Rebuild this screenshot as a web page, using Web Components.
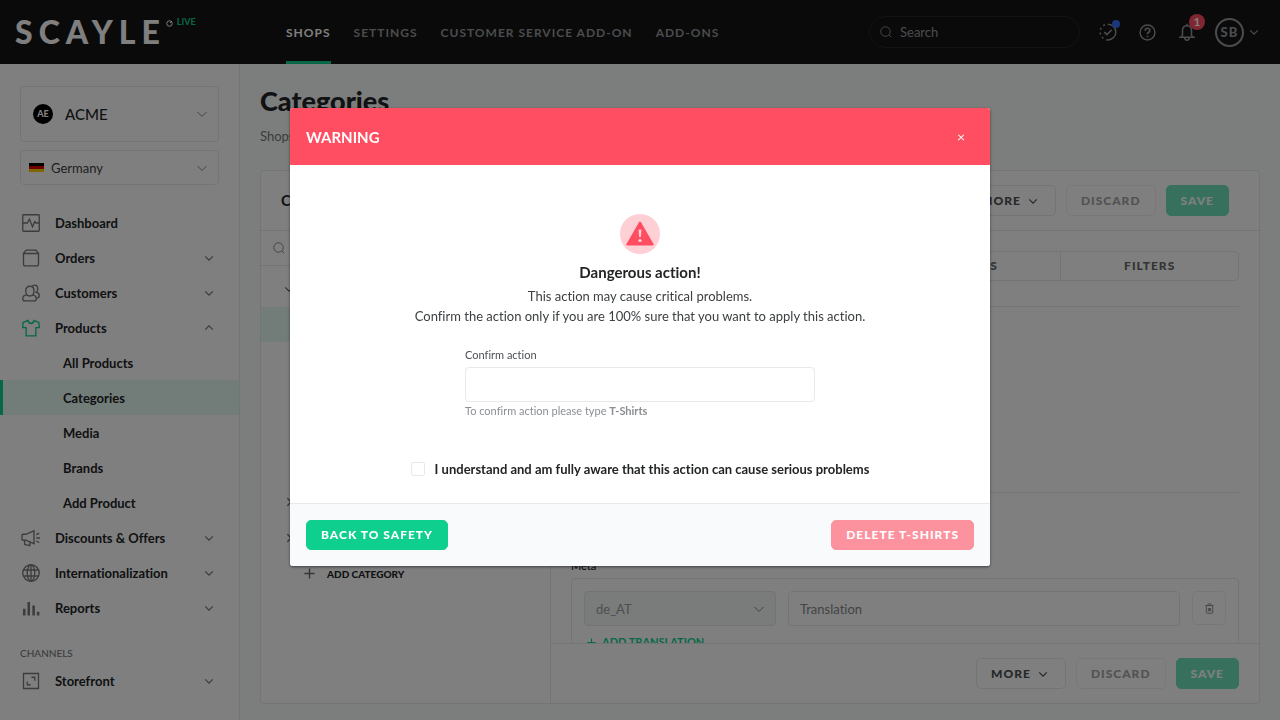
<!DOCTYPE html>
<html lang="en">
<head>
<meta charset="utf-8">
<meta name="viewport" content="width=device-width, initial-scale=1">
<title>Categories</title>
<style>
    :root {
        --green: #0fcf8f;
        --red: #ff4d61;
        --line: #e6eaea;
        --text: #222426;
        --muted: #8b8e92;
        --tint: #e5f9f2;
    }
    body {
        margin: 0;
        font: 13px/20px Lato, "Liberation Sans", sans-serif;
        font-variant-ligatures: no-common-ligatures;
        color: var(--text);
        background: #f9fafa;
    }
</style>
</head>
<body>
<shop-app></shop-app>

<script>
const ICONS = {
    search: '<circle cx="11" cy="11" r="9.5"/><path d="m18 18 4.5 4.5"/>',
    down: '<path d="m3 8 9 9 9-9"/>',
    up: '<path d="m3 16 9-9 9 9"/>',
    right: '<path d="m8 3 9 9-9 9"/>',
    plus: '<path d="M12 1v22M1 12h22"/>',
    dashboard: '<rect x="1" y="1" width="22" height="22" rx="1"/><path d="M1 12h6l3-5 4 10 3-7 1.500 2H23"/>',
    orders: '<path d="M2 6v14q0 2.500 2.500 2.500h15Q22 22.500 22 20V6zM2 6l2.500-3.500Q5 1.500 6.500 1.500h11q1.500 0 2 1L22 6"/>',
    customers: '<path d="M5 9q0-6 5.500-6T16 9q0 7-5.500 7T5 9zM6.500 14.500Q1 15 1 19.500 1 22.500 4 22.500h12q3 0 3-3 0-4.500-5.500-5M13.500 3.500q1-2 3.500-2 4 0 4 5 0 3-2 4.500 4 .500 4 4.500 0 3-4 3"/>',
    products: '<path d="M8 2 1.500 4.500 1 11.500h4.500V22.500h13V11.500H23L22.500 4.500 16 2q-1 4-4 4T8 2z"/>',
    discounts: '<path d="m16 2.500-11 4.500H1.500Q0 7 0 8.500v5Q0 15 1.500 15H5l11 4.500zM3.500 15v5.500q3.500 1 7 1.500V17.500M19 7.500l4-2M19 12h5M19 16l4 2"/>',
    globe: '<circle cx="12" cy="12" r="11"/><ellipse cx="12" cy="12" rx="5" ry="11"/><path d="M12 1v22M2 8h20M2 16h20"/>',
    reports: '<path d="M3 13v9M9 4v18M15.500 8.500V22M21.500 17v5" stroke-width="3.400"/>',
    storefront: '<path d="M2 2h20v20H2zM12.500 7H17v4.500M7 12.500V17h4.500"/>',
    trash: '<path d="M3 5.500h18M5 5.500V20q0 2.500 2 2.500h10q2 0 2-2.500V5.500M8 5.500q0-4 4-4t4 4M9.500 11v7M12 11v7M14.500 11v7"/>',
    task: '<path d="M12 1.500a10.500 10.500 0 0 1 0 21"/><path d="M12 22.500a10.500 10.500 0 0 1 0-21" stroke-dasharray="2.500 4"/><path d="m7 12 3.500 3.500 6.500-6.500"/>',
    help: '<circle cx="12" cy="12" r="10.500"/><path d="M8.800 9.500q0-3.500 3.200-3.500t3.200 3q0 2-2 3-1.200.800-1.200 2.500M12 16.500v2.200" stroke-width="2.400"/>',
    bell: '<path d="M1.500 19h21M4.500 19l1.500-3V10q0-6.500 6-6.500T18 10v6l1.500 3M9 19q0 4 3 4t3-4M12 1v2.500"/>'
};

class UiIcon extends HTMLElement {
    connectedCallback() {
        const size = this.getAttribute('size') || '18';
        const weight = this.getAttribute('weight') || '1.8';
        this.attachShadow({ mode: 'open' }).innerHTML = `
            <style>
                :host { display: inline-flex; flex: none; }
                svg { display: block; fill: none; stroke: currentColor; overflow: visible; }
            </style>
            <svg width="${size}" height="${size}" viewBox="0 0 24 24" stroke-width="${weight}" aria-hidden="true">${ICONS[this.getAttribute('name')]}</svg>
        `;
    }
}
customElements.define('ui-icon', UiIcon);

class UiButton extends HTMLElement {
    connectedCallback() {
        this.attachShadow({ mode: 'open' }).innerHTML = `
            <style>
                :host { display: block; }
                button {
                    display: flex; align-items: center; gap: 7px;
                    box-sizing: border-box; height: var(--button-height, 31px); padding: 0 14px;
                    font: 900 12px/16px Lato, "Liberation Sans", sans-serif;
                    letter-spacing: 1px; text-transform: uppercase; white-space: nowrap;
                    color: #65686b; background: #fff;
                    border: 1px solid var(--line); border-radius: 5px;
                }
                :host([kind="green"]) button { background: var(--green); border-color: var(--green); color: #fff; }
                :host([kind="red"]) button { background: var(--red); border-color: var(--red); color: #fff; }
                :host([menu]) button { padding-right: 17px; color: #4d5053; }
                button:disabled { opacity: .6; }
            </style>
            <button type="button" ${this.hasAttribute('disabled') ? 'disabled' : ''}>
                <slot></slot>${this.hasAttribute('menu') ? '<ui-icon name="down" size="10" weight="3"></ui-icon>' : ''}
            </button>
        `;
    }
}
customElements.define('ui-button', UiButton);

// Drop-down with an optional leading picture in the "lead" slot
class UiSelect extends HTMLElement {
    connectedCallback() {
        this.attachShadow({ mode: 'open' }).innerHTML = `
            <style>
                :host { display: block; --h: 35px; --size: 13px; --lead: 30px; }
                .wrap { display: grid; align-items: center; isolation: isolate; }
                .wrap > * { grid-area: 1 / 1; }
                select {
                    appearance: none; width: 100%; height: var(--h); box-sizing: border-box;
                    padding: 0 32px 0 var(--lead); margin: 0;
                    font: inherit; font-size: var(--size); color: var(--ink, #3d4042);
                    background: var(--fill, #fff); opacity: 1;
                    border: 1px solid var(--line); border-radius: 4px;
                }
                :host([size="large"]) { --h: 56px; --size: 15px; --lead: 44px; --ink: var(--text); }
                :host([size="large"]) select { font-weight: 500; }
                :host([plain]) { --lead: 11px; --fill: #f5f6f6; --ink: #9a9da0; }
                slot { display: block; z-index: 1; pointer-events: none; justify-self: start; padding-left: 9px; }
                :host([size="large"]) slot { padding-left: 13px; }
                ui-icon { justify-self: end; margin-right: 11px; color: #85888b; pointer-events: none; z-index: 1; }
            </style>
            <div class="wrap">
                <select aria-label="${this.getAttribute('label')}" ${this.hasAttribute('disabled') ? 'disabled' : ''}>
                    <option>${this.getAttribute('value')}</option>
                </select>
                <slot name="lead"></slot>
                <ui-icon name="down" size="12" weight="2"></ui-icon>
            </div>
        `;
    }
}
customElements.define('ui-select', UiSelect);

class AppHeader extends HTMLElement {
    connectedCallback() {
        this.attachShadow({ mode: 'open' }).innerHTML = `
            <style>
                :host { display: flex; height: 64px; background: #141414; color: #96999c; }
                .logo { display: flex; width: 270px; padding-left: 15px; box-sizing: border-box; color: #fff; text-decoration: none; }
                .logo b { font-size: 32px; line-height: 64px; font-weight: 900; letter-spacing: 6px; }
                .logo svg { margin-top: 20px; }
                .logo small { margin: 15px 0 0 4px; font-size: 9px; line-height: 14px; font-weight: 700; color: var(--green); }
                nav { display: flex; gap: 23px; flex: 1; padding-left: 16px; }
                nav a {
                    display: flex; align-items: center; box-sizing: border-box;
                    padding-top: 4px; border-bottom: 3px solid transparent;
                    font-size: 12px; line-height: 16px; font-weight: 700; letter-spacing: 1px;
                    color: inherit; text-decoration: none; white-space: nowrap;
                }
                nav a.active { color: #fff; border-bottom-color: var(--green); }
                .search {
                    align-self: center; display: flex; align-items: center; gap: 8px;
                    width: 211px; height: 32px; box-sizing: border-box; padding: 0 10px;
                    border: 1px solid #242627; border-radius: 16px;
                }
                input { flex: 1; min-width: 0; border: 0; background: none; padding: 0; font: inherit; color: #fff; outline: 0; }
                input::placeholder { color: #96999c; opacity: 1; }
                .tools { display: flex; align-items: center; gap: 22px; padding: 0 21px 0 19px; }
                button { position: relative; display: flex; align-items: center; padding: 0; border: 0; background: none; font: inherit; color: inherit; }
                .dot { position: absolute; right: -3px; top: -3px; width: 8px; height: 8px; border-radius: 50%; background: #376ef4; }
                .count {
                    position: absolute; right: -9px; top: -9px; width: 16px; height: 16px; border-radius: 50%;
                    font-size: 12px; line-height: 16px; font-weight: 700; background: var(--red); color: #fff;
                }
                .user { gap: 5px; margin-left: -3px; }
                .avatar {
                    width: 25px; height: 25px; border: 2px solid #96999c; border-radius: 50%;
                    font-size: 13px; line-height: 25px; font-weight: 900; letter-spacing: 1px; text-align: center;
                }
            </style>
            <a class="logo" href="#">
                <b>SCAYLE</b>
                <svg width="7" height="7" viewBox="0 0 14 14" fill="none" stroke="#fff" stroke-width="2"><circle cx="7" cy="7" r="5.500"/><path d="m8 6 4-4"/></svg>
                <small>LIVE</small>
            </a>
            <nav>
                <a class="active" href="#">SHOPS</a>
                <a href="#">SETTINGS</a>
                <a href="#">CUSTOMER SERVICE ADD-ON</a>
                <a href="#">ADD-ONS</a>
            </nav>
            <label class="search">
                <ui-icon name="search" size="12"></ui-icon>
                <input type="search" placeholder="Search" aria-label="Search">
            </label>
            <div class="tools">
                <button aria-label="Tasks"><ui-icon name="task" weight="2"></ui-icon><span class="dot"></span></button>
                <button aria-label="Help"><ui-icon name="help" weight="2" size="17"></ui-icon></button>
                <button aria-label="Notifications"><ui-icon name="bell" weight="2"></ui-icon><span class="count">1</span></button>
                <button class="user" aria-label="Account"><span class="avatar">SB</span><ui-icon name="down" size="10" weight="3"></ui-icon></button>
            </div>
        `;
    }
}
customElements.define('app-header', AppHeader);

class NavItem extends HTMLElement {
    connectedCallback() {
        const icon = this.getAttribute('icon');
        const chevron = this.getAttribute('chevron');
        this.attachShadow({ mode: 'open' }).innerHTML = `
            <style>
                :host { display: block; }
                a {
                    display: flex; align-items: center; height: 35px; box-sizing: border-box;
                    padding: 0 25px 0 22px; font-weight: 700; color: var(--text); text-decoration: none;
                }
                .label { flex: 1; margin-left: 15px; white-space: nowrap; }
                ui-icon { color: #77797c; }
                :host([open]) ui-icon:first-child { color: var(--green); }
                :host([sub]) a { padding-left: 63px; }
                :host([sub]) .label { margin-left: 0; }
                :host([active]) a { padding-left: 60px; border-left: 3px solid var(--green); background: var(--tint); }
            </style>
            <a href="#">
                ${icon ? `<ui-icon name="${icon}"></ui-icon>` : ''}
                <span class="label"><slot></slot></span>
                ${chevron ? `<ui-icon name="${chevron}" size="10" weight="3"></ui-icon>` : ''}
            </a>
        `;
    }
}
customElements.define('nav-item', NavItem);

class SideBar extends HTMLElement {
    connectedCallback() {
        this.attachShadow({ mode: 'open' }).innerHTML = `
            <style>
                :host { display: block; width: 240px; box-sizing: border-box; background: #fff; border-right: 1px solid var(--line); }
                .pickers { display: grid; gap: 8px; padding: 22px 20px 0; }
                .brand {
                    display: block; width: 20px; height: 20px; border-radius: 50%; background: #000; color: #fff;
                    font-size: 9px; line-height: 20px; font-weight: 900; text-align: center;
                }
                .flag { display: block; }
                nav { margin-top: 20px; }
                h2 { margin: 18px 20px 0; font-size: 10px; line-height: 20px; font-weight: 500; color: #77797c; }
                h2 + nav { margin-top: 0; }
            </style>
            <div class="pickers">
                <ui-select size="large" label="Company" value="ACME"><span slot="lead" class="brand">AE</span></ui-select>
                <ui-select label="Country" value="Germany">
                    <svg slot="lead" class="flag" width="15" height="9" viewBox="0 0 15 9"><path fill="#000" d="M0 0h15v3H0z"/><path fill="#d00" d="M0 3h15v3H0z"/><path fill="#ffce00" d="M0 6h15v3H0z"/></svg>
                </ui-select>
            </div>
            <nav>
                <nav-item icon="dashboard">Dashboard</nav-item>
                <nav-item icon="orders" chevron="down">Orders</nav-item>
                <nav-item icon="customers" chevron="down">Customers</nav-item>
                <nav-item icon="products" chevron="up" open>Products</nav-item>
                <nav-item sub>All Products</nav-item>
                <nav-item sub active>Categories</nav-item>
                <nav-item sub>Media</nav-item>
                <nav-item sub>Brands</nav-item>
                <nav-item sub>Add Product</nav-item>
                <nav-item icon="discounts" chevron="down">Discounts &amp; Offers</nav-item>
                <nav-item icon="globe" chevron="down">Internationalization</nav-item>
                <nav-item icon="reports" chevron="down">Reports</nav-item>
            </nav>
            <h2>CHANNELS</h2>
            <nav>
                <nav-item icon="storefront" chevron="down">Storefront</nav-item>
            </nav>
        `;
    }
}
customElements.define('side-bar', SideBar);

class CategoryTree extends HTMLElement {
    connectedCallback() {
        this.attachShadow({ mode: 'open' }).innerHTML = `
            <style>
                :host { display: block; border-right: 1px solid var(--line); }
                h2 { margin: 0; padding: 0 20px; font-size: 15px; line-height: 59px; font-weight: 700; border-bottom: 1px solid var(--line); }
                .search { display: flex; align-items: center; gap: 8px; height: 34px; padding: 0 12px; border-bottom: 1px solid var(--line); color: #85888b; }
                input { flex: 1; min-width: 0; padding: 0; border: 0; font: inherit; outline: 0; }
                ul { margin: 0; padding: 0; list-style: none; }
                .tree { display: grid; gap: 1px; margin: 5px 0 1px; }
                .row { display: flex; align-items: center; height: 35px; padding-left: 23px; color: #65686b; }
                .current { background: var(--tint); }
                button {
                    display: flex; align-items: center; gap: 12px; height: 35px; padding: 0 0 0 43px;
                    border: 0; background: none; color: #65686b;
                    font: 900 10px/16px Lato, "Liberation Sans", sans-serif;
                }
                button span { color: var(--text); }
            </style>
            <h2>Categories</h2>
            <label class="search"><ui-icon name="search" size="12" weight="2"></ui-icon><input type="search" aria-label="Search categories"></label>
            <ul class="tree">
                <li class="row"><ui-icon name="down" size="10" weight="3"></ui-icon></li>
                <li>
                    <ul>
                        <li class="row current"></li>
                        <li class="row"></li>
                        <li class="row"></li>
                        <li class="row"></li>
                    </ul>
                </li>
                <li class="row"></li>
                <li class="row"><ui-icon name="right" size="10" weight="3"></ui-icon></li>
                <li class="row"><ui-icon name="right" size="10" weight="3"></ui-icon></li>
            </ul>
            <button type="button"><ui-icon name="plus" size="11" weight="3"></ui-icon><span>ADD CATEGORY</span></button>
        `;
    }
}
customElements.define('category-tree', CategoryTree);

class CategoryEditor extends HTMLElement {
    connectedCallback() {
        this.attachShadow({ mode: 'open' }).innerHTML = `
            <style>
                :host { display: flex; flex-direction: column; min-width: 0; min-height: 0; }
                .bar { display: flex; justify-content: flex-end; align-items: center; gap: 10px; height: 60px; box-sizing: border-box; flex: none; }
                header { padding: 0 30px; border-bottom: 1px solid var(--line); }
                footer { padding: 0 20px; border-top: 1px solid var(--line); }
                .scroll { flex: 1; min-height: 0; overflow: hidden; padding: 20px 20px 0; }
                .tabs { display: grid; grid-template-columns: 7fr 4fr 4fr; border: 1px solid var(--line); border-radius: 5px; }
                .tabs button {
                    height: 28px; padding: 0; border: 0; border-left: 1px solid var(--line); background: none;
                    font: 900 12px/16px Lato, "Liberation Sans", sans-serif; letter-spacing: 1px; color: #65686b;
                }
                .tabs button:first-child { border-left: 0; }
                section { height: 185px; margin-top: 25px; border: solid var(--line); border-width: 1px 0; }
                h3 { margin: 63px 0 2px; font-size: 11px; line-height: 20px; font-weight: 500; }
                .box { padding: 12px; border: 1px solid var(--line); border-radius: 4px; }
                .row { display: grid; grid-template-columns: 192px 1fr 34px; gap: 12px; align-items: start; }
                input { height: 35px; box-sizing: border-box; padding: 0 11px; border: 1px solid var(--line); border-radius: 4px; font: inherit; min-width: 0; }
                input::placeholder { color: #85888b; opacity: 1; }
                .trash { display: grid; place-items: center; height: 34px; padding: 0; border: 1px solid #efefef; border-radius: 5px; background: none; color: #85888b; }
                .add {
                    display: flex; align-items: center; gap: 6px; margin-top: 8px; padding: 0 0 0 3px;
                    border: 0; background: none; color: var(--green);
                    font: 700 11px/16px Lato, "Liberation Sans", sans-serif;
                }
            </style>
            <header class="bar">
                <ui-button menu>More</ui-button>
                <ui-button disabled>Discard</ui-button>
                <ui-button kind="green" disabled>Save</ui-button>
            </header>
            <div class="scroll">
                <div class="tabs">
                    <button type="button">BASICS</button>
                    <button type="button">IMAGES</button>
                    <button type="button">FILTERS</button>
                </div>
                <section></section>
                <h3>Meta</h3>
                <div class="box">
                    <div class="row">
                        <ui-select plain disabled label="Locale" value="de_AT"></ui-select>
                        <input type="text" placeholder="Translation" aria-label="Translation">
                        <button class="trash" type="button" aria-label="Remove"><ui-icon name="trash" size="11" weight="2"></ui-icon></button>
                    </div>
                    <button class="add" type="button"><ui-icon name="plus" size="9" weight="3"></ui-icon>ADD TRANSLATION</button>
                </div>
            </div>
            <footer class="bar">
                <ui-button menu>More</ui-button>
                <ui-button disabled>Discard</ui-button>
                <ui-button kind="green" disabled>Save</ui-button>
            </footer>
        `;
    }
}
customElements.define('category-editor', CategoryEditor);

class WarningModal extends HTMLElement {
    connectedCallback() {
        this.attachShadow({ mode: 'open' }).innerHTML = `
            <style>
                :host {
                    position: fixed; inset: 0; z-index: 10; box-sizing: border-box; padding: 15vh 16px 0;
                    background: rgb(0 0 0 / 50%);
                }
                .dialog {
                    --button-height: 30px;
                    max-width: 700px; margin: 0 auto; overflow: hidden;
                    background: #fff; border-radius: 3px; box-shadow: 0 1px 3px rgb(0 0 0 / 50%);
                }
                header { display: flex; align-items: center; justify-content: space-between; height: 57px; padding: 0 16px; background: var(--red); color: #fff; }
                h2 { margin: 0; font-size: 15px; line-height: 20px; font-weight: 700; }
                .close { width: 26px; height: 26px; padding: 0; border: 0; background: none; color: #fff; font: 400 14px/20px Lato, "Liberation Sans", sans-serif; }
                .body { display: flex; flex-direction: column; align-items: center; padding: 49px 16px 24px; text-align: center; }
                .body svg { display: block; }
                h3 { margin: 8px 0 4px; font-size: 15px; line-height: 20px; font-weight: 700; }
                p { margin: 0; color: #3d4042; }
                .field { width: 350px; max-width: 100%; margin-top: 19px; text-align: left; font-size: 11px; color: #4d5053; }
                .field label { display: block; margin-bottom: 2px; }
                .field input { display: block; width: 100%; height: 35px; box-sizing: border-box; padding: 0 11px; border: 1px solid var(--line); border-radius: 4px; font: inherit; }
                .hint { line-height: 18px; color: var(--muted); }
                .hint b { font-weight: 700; }
                .agree { display: flex; align-items: center; gap: 10px; margin-top: 39px; font-weight: 700; }
                .agree input { appearance: none; flex: none; width: 14px; height: 14px; margin: 0; border: 1px solid var(--line); border-radius: 2px; background: #fff; }
                footer { display: flex; justify-content: space-between; align-items: center; padding: 16px; background: #f9fafc; border-top: 1px solid var(--line); }
            </style>
            <div class="dialog" role="dialog" aria-modal="true" aria-labelledby="title">
                <header>
                    <h2 id="title">WARNING</h2>
                    <button class="close" type="button" aria-label="Close">×</button>
                </header>
                <div class="body">
                    <svg width="40" height="40" viewBox="0 0 40 40">
                        <circle cx="20" cy="20" r="20" fill="#ffcfd6"/>
                        <path d="M20 8.500 32.700 30.500H7.300z" fill="#ff4d61" stroke="#ff4d61" stroke-width="2" stroke-linejoin="round"/>
                        <path d="m18.600 15.500h2.800l-.500 7.500h-1.800z" fill="#ffcfd6"/>
                        <circle cx="20" cy="26.500" r="1.600" fill="#ffcfd6"/>
                    </svg>
                    <h3>Dangerous action!</h3>
                    <p>This action may cause critical problems.</p>
                    <p>Confirm the action only if you are 100% sure that you want to apply this action.</p>
                    <div class="field">
                        <label for="confirm">Confirm action</label>
                        <input id="confirm" type="text">
                        <div class="hint">To confirm action please type <b>T-Shirts</b></div>
                    </div>
                    <label class="agree"><input type="checkbox">I understand and am fully aware that this action can cause serious problems</label>
                </div>
                <footer>
                    <ui-button kind="green">Back to safety</ui-button>
                    <ui-button kind="red" disabled>Delete T-Shirts</ui-button>
                </footer>
            </div>
        `;
    }
}
customElements.define('warning-modal', WarningModal);

class ShopApp extends HTMLElement {
    connectedCallback() {
        this.attachShadow({ mode: 'open' }).innerHTML = `
            <style>
                :host { display: grid; grid-template: auto minmax(0, 1fr) / auto minmax(0, 1fr); height: 100vh; overflow: hidden; }
                app-header { grid-column: 1 / -1; }
                main { display: flex; flex-direction: column; padding: 21px 20px 16px; min-height: 0; }
                h1 { margin: 0; font-size: 27px; line-height: 32px; font-weight: 900; }
                .crumbs { margin: 9px 0 24px; line-height: 20px; color: #77797c; }
                .crumbs a { color: inherit; text-decoration: none; }
                .panel {
                    flex: 1; min-height: 0; display: grid; grid-template: minmax(0, 1fr) / 290px minmax(0, 1fr);
                    background: #fff; border: 1px solid var(--line); border-radius: 4px;
                }
            </style>
            <app-header></app-header>
            <side-bar></side-bar>
            <main>
                <h1>Categories</h1>
                <div class="crumbs"><a href="#">Shops</a></div>
                <div class="panel">
                    <category-tree></category-tree>
                    <category-editor></category-editor>
                </div>
            </main>
            <warning-modal></warning-modal>
        `;
    }
}
customElements.define('shop-app', ShopApp);
</script>
</body>
</html>
